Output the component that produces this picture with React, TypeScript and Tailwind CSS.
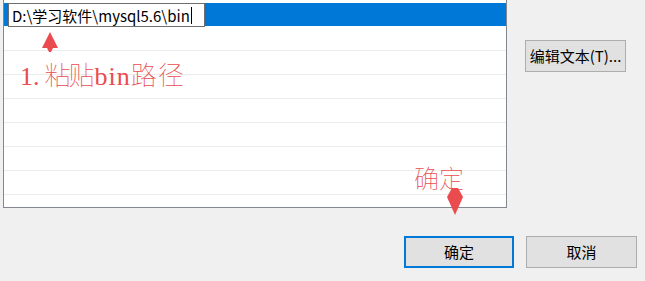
export default function App() {
  const ui = { fontFamily: '"Noto Sans CJK SC", "Noto Sans", sans-serif' };
  const note = { fontFamily: '"Liberation Serif", "Noto Sans CJK SC", serif' };
  const rows = [0, 1, 2, 3, 4, 5, 6];

  return (
    <div className="relative w-[645px] h-[281px] overflow-hidden bg-[#f0f0f0] text-black" style={ui}>
      <div className="flex items-start">
        {/* list box */}
        <div className="ml-[3px] w-[504px] h-[208px] overflow-hidden bg-white border-x border-b border-[#828790] pt-[3px]">
          <div className="flex h-[23px] bg-[#0078d7]">
            <div className="ml-[4px] flex items-center w-[197px] h-[24px] bg-white border border-[#6e6e6e] pl-[3px] text-[15px] leading-none">
              <span>D:\学习软件\mysql5.6\bin</span>
              <span className="ml-[1px] w-px h-[17px] bg-black" />
            </div>
          </div>
          <div className="h-[24px]" />
          {rows.map((r) => (
            <div key={r} className="h-[24px] border-t border-[#ececec]" />
          ))}
        </div>

        {/* side button */}
        <div className="ml-[18px] mt-[40px] flex items-center justify-center w-[101px] h-[32px] bg-[#e1e1e1] border border-[#adadad] text-[15px]">
          编辑文本(T)...
        </div>
      </div>

      {/* dialog buttons */}
      <div className="mt-[28px] flex justify-end gap-[12px] pr-[8px]">
        <div className="flex items-center justify-center w-[110px] h-[32px] bg-[#e1e1e1] border-2 border-[#0078d7] text-[15px]">
          确定
        </div>
        <div className="flex items-center justify-center w-[111px] h-[32px] bg-[#e1e1e1] border border-[#adadad] text-[15px]">
          取消
        </div>
      </div>

      {/* annotations */}
      <svg className="absolute left-[42px] top-[32px]" width="16" height="21" viewBox="0 0 16 21">
        <polygon points="8,0 16,16 11,16 9,20 7,20 5,16 0,16" fill="#ea4b4e" />
      </svg>
      <div className="absolute left-[20px] top-[62px] text-[26px] leading-[30px] text-[#ea4b4e] whitespace-nowrap font-thin" style={note}>
        <span className="mr-[5px]">1.</span>
        <span className="tracking-[-2px]">粘贴</span>
        <span className="ml-[2px] tracking-[1px]">bin</span>
        <span className="tracking-[1px]">路径</span>
      </div>
      <div className="absolute left-[414px] top-[165px] text-[25px] leading-[30px] text-[#ea4b4e] font-thin" style={note}>
        确定
      </div>
      <svg className="absolute left-[447px] top-[188px]" width="16" height="27" viewBox="0 0 16 27">
        <polygon points="5,0 11,0 16,9 8,27 0,9" fill="#ea4b4e" />
      </svg>
    </div>
  );
}
